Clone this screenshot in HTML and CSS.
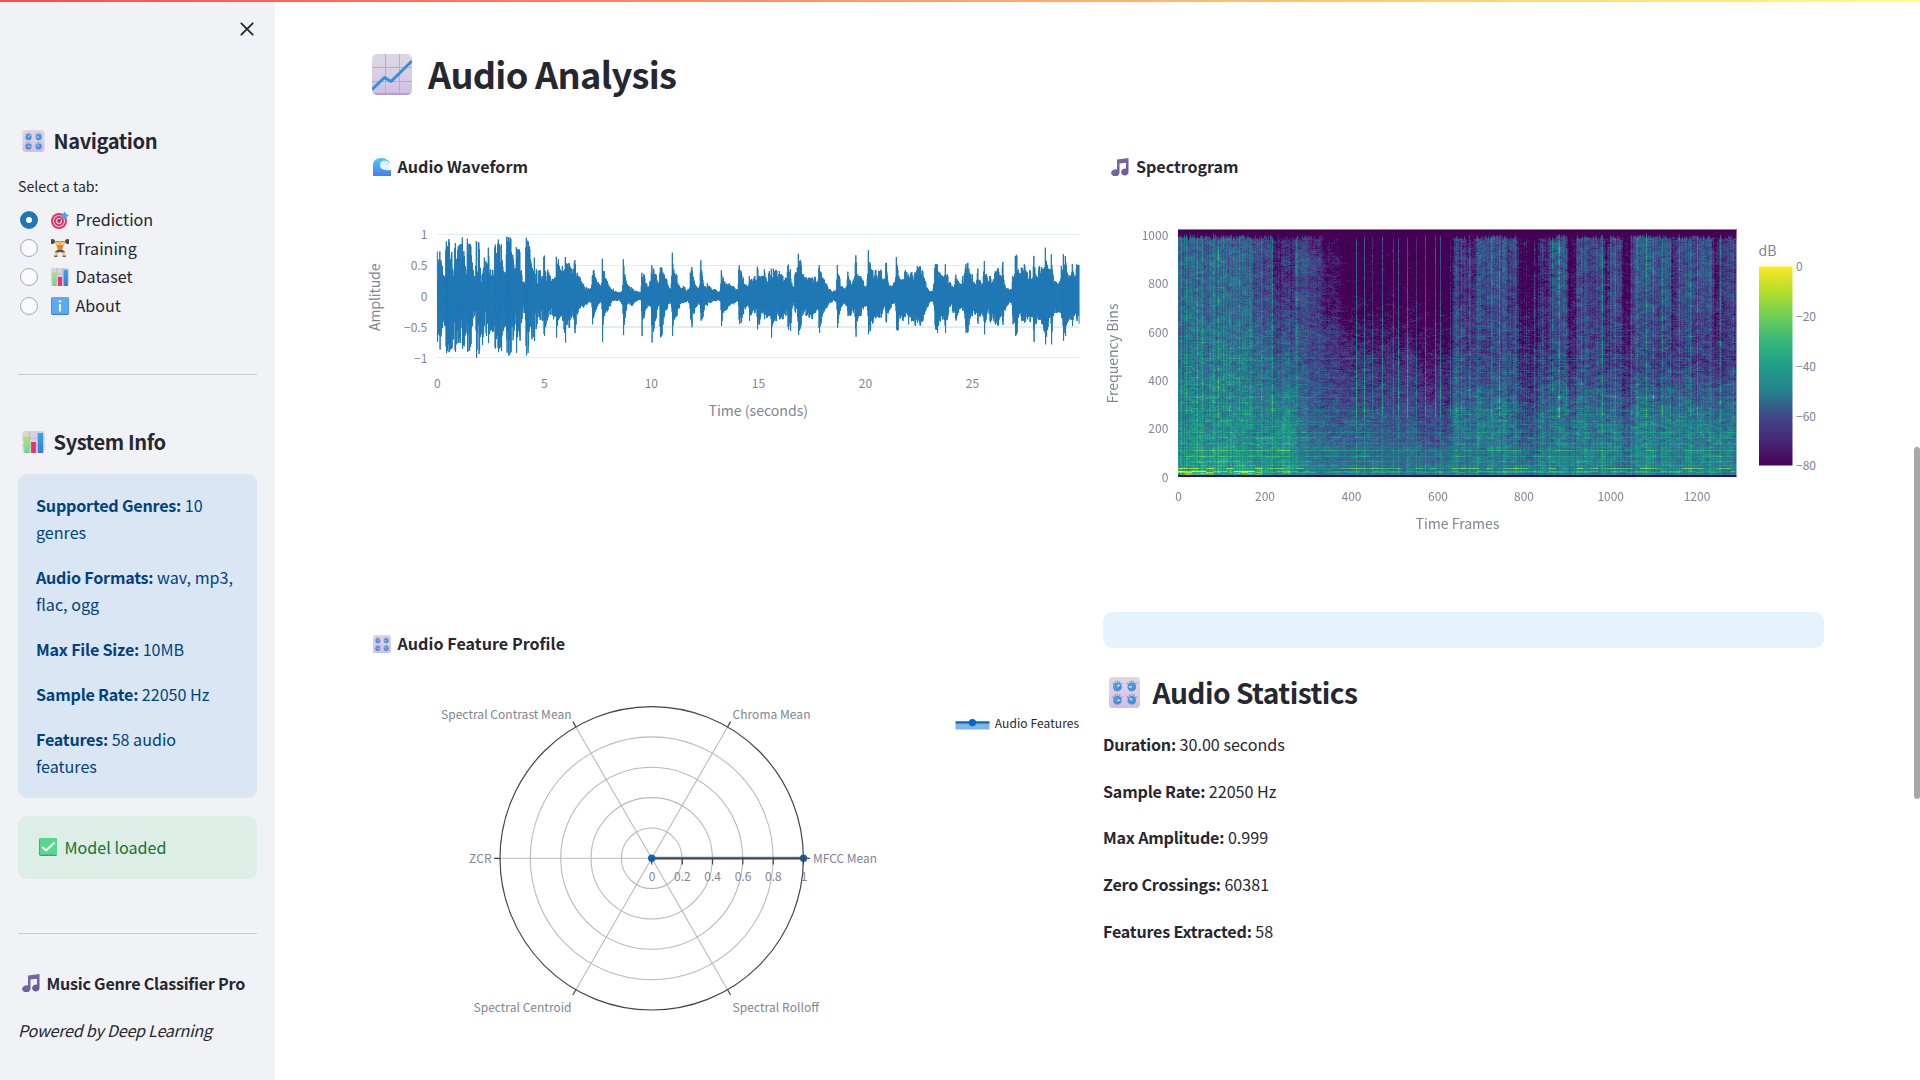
FILE: index.html
```html
<!DOCTYPE html>
<html lang="en">
<head>
<meta charset="utf-8">
<title>Music Genre Classifier Pro</title>
<link rel="stylesheet" href="styles.css">
</head>
<body>
<svg class="defs" width="0" height="0" aria-hidden="true">
  <defs>
    <linearGradient id="g-plate" x1="0" y1="0" x2="0" y2="1"><stop offset="0" stop-color="#dcd8e2"/><stop offset=".5" stop-color="#dacde6"/><stop offset="1" stop-color="#cfbfe3"/></linearGradient>
    <linearGradient id="g-wave" x1="0" y1="0" x2="0" y2="1"><stop offset="0" stop-color="#50c8fa"/><stop offset="1" stop-color="#4a7df0"/></linearGradient>
    <linearGradient id="g-green" x1="0" y1="0" x2="0" y2="1"><stop offset="0" stop-color="#b6e368"/><stop offset="1" stop-color="#5fdc9a"/></linearGradient>
    <linearGradient id="g-blue" x1="0" y1="0" x2="0" y2="1"><stop offset="0" stop-color="#35a5f0"/><stop offset="1" stop-color="#3b7bd0"/></linearGradient>
    <linearGradient id="g-note" x1="0" y1="0" x2="1" y2="1"><stop offset="0" stop-color="#7f70b0"/><stop offset="1" stop-color="#66559c"/></linearGradient>
    <linearGradient id="g-db" x1="0" y1="0" x2="0" y2="1">
      <stop offset="0" stop-color="#fde725"/><stop offset=".125" stop-color="#b5de2b"/><stop offset=".25" stop-color="#6ece58"/><stop offset=".375" stop-color="#35b779"/><stop offset=".5" stop-color="#1f9e89"/><stop offset=".625" stop-color="#26828e"/><stop offset=".75" stop-color="#3e4989"/><stop offset=".875" stop-color="#482878"/><stop offset="1" stop-color="#440154"/>
    </linearGradient>
    <g id="knob">
      <path d="M-3.8-2.6l-1.2-1.1M-2-4.2l-.5-1.6M0-4.6v-1.800M2-4.2l.5-1.600M3.800-2.600l1.200-1.100" stroke="#9a8e9d" stroke-width="1.200" fill="none"/>
      <circle r="4.500" cy=".6" fill="#a99bc6"/><circle r="4.200" fill="#3f8ed8"/><circle r="3" cx="-.6" cy="-.7" fill="#4d9be2"/>
    </g>
    <symbol id="i-knobs" viewBox="0 0 32 32">
      <rect width="32" height="32" rx="3.5" fill="url(#g-plate)"/>
      <use href="#knob" x="8.7" y="10"/><use href="#knob" x="23.5" y="10"/><use href="#knob" x="8.7" y="23.8"/><use href="#knob" x="23.5" y="23.8"/>
      <path d="M8.7 10l2.2-2M23.5 10.3h-3M8.7 24h3M23.5 23.8l-2.2-2" stroke="#fff" stroke-width="1.1"/>
    </symbol>
    <symbol id="i-bars" viewBox="0 0 32 32">
      <rect width="32" height="32" rx="3.5" fill="#d9d2e0"/>
      <path d="M0 10.5h32M0 21.5h32M10.5 0v32M21.5 0v32" stroke="#b8adbd" stroke-width="1.2"/>
      <path d="M2.5 7.5h7V32h-6q-1 0-1-1z" fill="url(#g-green)"/><path d="M12.5 16h7v16h-7z" fill="#e8336e"/><path d="M22.5 3H30v28q0 1-1 1h-6.500z" fill="url(#g-blue)"/>
    </symbol>
    <symbol id="i-line" viewBox="0 0 40 41">
      <rect width="40" height="41" rx="5" fill="url(#g-plate)"/>
      <path d="M0 13.500h40M0 27.500h40M13.500 0v41M27.500 0v41" stroke="#b9aebf" stroke-width="1"/>
      <path d="M1 39q2 2 5 2h28q4 0 5-2z" fill="#b99dd2"/>
      <path d="M0 35.500L12.500 23.500l6.500 4L40 7" fill="none" stroke="#3590d8" stroke-width="3" stroke-linejoin="round"/>
    </symbol>
    <symbol id="i-wave" viewBox="0 0 18 18">
      <path d="M0 18V8Q0 0 8 0q7 0 9 5.500-1-1-2.500-.5L13 7l2 1.500q-1 2.500-4 3 3 1.500 7 .3V18z" fill="url(#g-wave)"/>
      <path d="M8 3.500q3-1.500 6-.5 2.500 1.500 3.500 4-.5 3.500-4 4.500-4 .8-6-2-1-3 .5-6z" fill="#e9f5fc"/><path d="M9 3l1 1.500M12 3.500L11 5M15 5l-1 1.500" stroke="#8cd3f7" stroke-width=".9"/>
    </symbol>
    <symbol id="i-note" viewBox="0 0 18 18">
      <path d="M6 1.500L17.500 0v14a3.700 3.400 0 1 1-2.500-3.200V4.800l-6.500.8v9A4.200 3.500 0 1 1 6 11.600z" fill="url(#g-note)"/>
    </symbol>
    <symbol id="i-target" viewBox="0 0 18 18">
      <circle cx="8" cy="10" r="8" fill="#d93868"/><circle cx="8" cy="10" r="6.100" fill="#f3c3d4"/><circle cx="8" cy="10" r="5" fill="#d93868"/><circle cx="8" cy="10" r="3" fill="#f6d9e4"/><circle cx="8" cy="10" r="1.900" fill="#c72d5c"/>
      <path d="M8 10l6-6" stroke="#5a4f86" stroke-width="1"/><path d="M10.500 7.500L11 4l3-3.500.8 2.500L18 4l-3.500 3.200z" fill="#3fa7ef"/>
    </symbol>
    <symbol id="i-lift" viewBox="0 0 18 18">
      <path d="M1 2.500h16" stroke="#77727d" stroke-width="1"/><path d="M0 .8Q0 0 1 0h1.500v5H1Q0 5 0 4.200zM15.500 0H17q1 0 1 .8v3.400q0 .8-1 .8h-1.500zM2.500.8h1.200v3.500H2.500zM14.300.8h1.200v3.500h-1.200z" fill="#494552"/>
      <path d="M4.500 2.500L6.500 7h5l2-4.500" fill="none" stroke="#f9bd3c" stroke-width="1.900"/><circle cx="9" cy="4" r="2.100" fill="#f6b13a"/>
      <path d="M6 6h6l-.8 6H6.800z" fill="#f57c26"/><path d="M6.500 11h5l2.500 1.500-1 1.500-4-1-4 1-1-1.500z" fill="#54506b"/><path d="M4.500 13l1.200 3.500M13.500 13l-1.200 3.500" stroke="#f9bd3c" stroke-width="1.900"/><path d="M3 16.500h3.500V18H3zM11.500 16.500H15V18h-3.500z" fill="#77616b"/>
    </symbol>
    <symbol id="i-info" viewBox="0 0 18 18">
      <rect width="18" height="18" rx="1.800" fill="#3f80dc"/><rect x=".6" width="17" height="16.800" rx="1.500" fill="#5aa9fa"/><circle cx="9" cy="4.300" r="1.300" fill="#fff"/><path d="M9 7v7.500" stroke="#fff" stroke-width="2"/>
    </symbol>
    <symbol id="i-check" viewBox="0 0 18 18">
      <rect width="18" height="18" rx="1.800" fill="#3aa070"/><rect x=".7" width="17.300" height="16.800" rx="1.500" fill="#55d88b"/><path d="M3.700 9.500l3.300 3 8-7.500" fill="none" stroke="#fff" stroke-width="2" stroke-linecap="round" stroke-linejoin="round"/>
    </symbol>
  </defs>
</svg>
<div class="topbar"></div>
<div class="scroll-thumb"></div>
<div class="app">
  <aside class="sidebar">
    <div class="close-row"><svg width="14" height="14" viewBox="0 0 14 14"><path d="M1.300 1.300l11.400 11.400M12.700 1.300L1.300 12.700" stroke="#262730" stroke-width="1.800" stroke-linecap="round"/></svg></div>
    <h2 class="side-title nav-title"><svg class="ic-md"><use href="#i-knobs"/></svg><span>Navigation</span></h2>
    <p class="radio-label">Select a tab:</p>
    <div class="radios">
      <label class="radio"><i class="dot on"></i><svg class="ic-sm"><use href="#i-target"/></svg><span>Prediction</span></label>
      <label class="radio"><i class="dot"></i><svg class="ic-sm"><use href="#i-lift"/></svg><span>Training</span></label>
      <label class="radio"><i class="dot"></i><svg class="ic-sm"><use href="#i-bars"/></svg><span>Dataset</span></label>
      <label class="radio"><i class="dot"></i><svg class="ic-sm"><use href="#i-info"/></svg><span>About</span></label>
    </div>
    <div class="rule"></div>
    <h2 class="side-title info-title"><svg class="ic-md"><use href="#i-bars"/></svg><span>System Info</span></h2>
    <div class="info-box">
      <p><b>Supported Genres:</b> 10 genres</p>
      <p><b>Audio Formats:</b> wav, mp3, flac, ogg</p>
      <p><b>Max File Size:</b> 10MB</p>
      <p><b>Sample Rate:</b> 22050 Hz</p>
      <p><b>Features:</b> 58 audio<br>features</p>
    </div>
    <div class="ok-box"><svg class="ic-sm"><use href="#i-check"/></svg><span>Model loaded</span></div>
    <div class="rule"></div>
    <p class="brand"><svg class="ic-sm"><use href="#i-note"/></svg><b>Music Genre Classifier Pro</b></p>
    <p class="powered">Powered by Deep Learning</p>
  </aside>
  <main class="main">
    <h1 class="page-title"><svg><use href="#i-line"/></svg><span>Audio Analysis</span></h1>
    <div class="grid">
      <svg class="chart" width="720" height="480" viewBox="365 130 720 480">
        <use href="#i-wave" x="373" y="158" width="18" height="18"/>
        <text class="ct" x="397.500" y="173.300" textLength="130.500">Audio Waveform</text>
        <path d="M437 234.500h642M437 265.500h642M437 296.500h642M437 357.500h642" stroke="#e6eaf1"/>
        <path d="M437 327h642" stroke="#e6eaf1" stroke-width="2"/>
        <path id="waveform" fill="none" stroke="#1f77b4" stroke-width="1" stroke-linejoin="bevel"/>
        <g class="tk end"><text x="427.300" y="239">1</text><text x="427.300" y="269.700">0.5</text><text x="427.300" y="301">0</text><text x="427.300" y="332">−0.5</text><text x="427.300" y="363">−1</text></g>
        <g class="tk mid"><text x="437.300" y="388">0</text><text x="544.300" y="388">5</text><text x="651.300" y="388">10</text><text x="758.500" y="388">15</text><text x="865.500" y="388">20</text><text x="972.500" y="388">25</text></g>
        <text class="at" x="708.500" y="416" textLength="99.500">Time (seconds)</text>
        <text class="at" transform="translate(380.200 331) rotate(-90)" textLength="67.500">Amplitude</text>
      </svg>
      <svg class="chart" width="721" height="480" viewBox="1103 130 721 480">
        <use href="#i-note" x="1111" y="158" width="18" height="18"/>
        <text class="ct" x="1136" y="173.300" textLength="102.500">Spectrogram</text>
        <foreignObject x="1178" y="229" width="559" height="248"><canvas id="spectrogram" class="spectrogram" width="559" height="248"></canvas></foreignObject>
        <path d="M1178 229.500h558.500v247.500" fill="none" stroke="#fff" stroke-opacity=".45"/>
        <g class="tk end"><text x="1168.300" y="239.700">1000</text><text x="1168.300" y="288">800</text><text x="1168.300" y="336.500">600</text><text x="1168.300" y="384.800">400</text><text x="1168.300" y="433">200</text><text x="1168.300" y="481.500">0</text></g>
        <g class="tk mid"><text x="1178.700" y="501">0</text><text x="1265" y="501">200</text><text x="1351.500" y="501">400</text><text x="1438" y="501">600</text><text x="1524" y="501">800</text><text x="1610.700" y="501">1000</text><text x="1697" y="501">1200</text></g>
        <text class="at" x="1415.500" y="528.700" textLength="84">Time Frames</text>
        <text class="at" transform="translate(1118.200 403.500) rotate(-90)" textLength="100">Frequency Bins</text>
        <text class="at" x="1758.500" y="256">dB</text>
        <rect x="1759" y="266.500" width="33.500" height="199" fill="url(#g-db)"/>
        <g class="tk"><text x="1796" y="271.300">0</text><text x="1796" y="321.300">−20</text><text x="1796" y="371.300">−40</text><text x="1796" y="421">−60</text><text x="1796" y="470.300">−80</text></g>
      </svg>
      <svg class="chart" width="720" height="468" viewBox="365 612 720 468">
        <use href="#i-knobs" x="373" y="635" width="18" height="18"/>
        <text class="ct" x="397.500" y="650" textLength="167.500">Audio Feature Profile</text>
        <g fill="none" stroke="#bababa" stroke-width="1.100">
          <circle cx="651.700" cy="858.300" r="30.350"/><circle cx="651.700" cy="858.300" r="60.700"/><circle cx="651.700" cy="858.300" r="91"/><circle cx="651.700" cy="858.300" r="121.400"/>
          <path d="M500 858.300h303.500M575.850 726.900l151.700 262.800M727.550 726.900L575.850 989.700"/>
        </g>
        <path d="M651.700 858.300h151.700" stroke="#0068c9" stroke-opacity=".75" stroke-width="3"/>
        <circle cx="651.700" cy="858.300" r="3.700" fill="#0068c9"/><circle cx="803.500" cy="858.300" r="3.700" fill="#0068c9"/>
        <g fill="none" stroke="#444" stroke-width="1.200">
          <circle cx="651.700" cy="858.300" r="151.700"/>
          <path d="M651.700 858.300h158.300M494 858.300h6.500M575.850 726.900l-3-5.300M727.550 726.900l3-5.300M575.850 989.700l-3 5.300M727.550 989.700l3 5.300M651.700 858v6.500M682.300 858v6.500M712.500 858v6.500M742.800 858v6.500M773.300 858v6.500M803.500 858v6.500"/>
        </g>
        <g class="tk mid"><text x="652" y="881">0</text><text x="682.300" y="881">0.2</text><text x="712.600" y="881">0.4</text><text x="743" y="881">0.6</text><text x="773.300" y="881">0.8</text><text x="804" y="881">1</text></g>
        <g class="tk"><text x="441" y="719" textLength="130.500">Spectral Contrast Mean</text><text x="469" y="863.300" textLength="22.700">ZCR</text><text x="473.500" y="1012" textLength="98">Spectral Centroid</text><text x="732.500" y="719" textLength="78">Chroma Mean</text><text x="813" y="863.300" textLength="64">MFCC Mean</text><text x="732.500" y="1012" textLength="86.500">Spectral Rolloff</text></g>
        <path d="M955.500 724h34v5.500h-34z" fill="#80b4e4"/><path d="M955.500 722.500h34" stroke="#0068c9" stroke-width="2.500"/><circle cx="972.400" cy="722.600" r="3.700" fill="#0068c9"/>
        <text class="tk lg" x="994.700" y="728" textLength="84.500">Audio Features</text>
      </svg>
      <section class="stats">
        <div class="banner"></div>
        <h2><svg><use href="#i-knobs"/></svg><span>Audio Statistics</span></h2>
        <p><b>Duration:</b> 30.00 seconds</p>
        <p><b>Sample Rate:</b> 22050 Hz</p>
        <p><b>Max Amplitude:</b> 0.999</p>
        <p><b>Zero Crossings:</b> 60381</p>
        <p><b>Features Extracted:</b> 58</p>
      </section>
    </div>
  </main>
</div>
<script src="charts.js"></script>
</body>
</html>
```
FILE: styles.css
```css
* { box-sizing: border-box; margin: 0; padding: 0; }
body { height: 1080px; overflow: hidden; background: #fff; color: #262730; font-family: "Noto Sans CJK JP", "Noto Sans", sans-serif; font-size: 16.1px; line-height: 27px; }
b, h1, h2 { font-weight: 600; }
b { letter-spacing: -0.2px; }
svg { flex: none; }
.defs { position: absolute; }
.topbar { position: absolute; z-index: 2; top: 0; left: 0; right: 0; height: 2px; background: linear-gradient(90deg, #ff4b4b, #fffd80); }
.scroll-thumb { position: absolute; z-index: 2; top: 447px; right: 0; width: 6px; height: 352px; border-radius: 3px; background: #a8a8ac; }
.app { display: flex; height: 1080px; }
.sidebar { flex: none; width: 275px; padding: 22px 18px 0; background: #f0f2f6; }
.close-row { display: flex; justify-content: flex-end; height: 14px; padding-right: 3px; }
.close-row svg { display: block; }
.ic-sm { width: 18px; height: 18px; }
.ic-md { width: 23px; height: 22px; }
.side-title { display: flex; align-items: center; gap: 8.500px; height: 27px; padding-left: 4px; font-size: 20.1px; letter-spacing: -0.4px; }
.nav-title { margin-top: 91px; margin-bottom: 20px; }
.radio-label { height: 24px; line-height: 24px; font-size: 14.100px; margin-bottom: 7.500px; letter-spacing: 0.03px; }
.radios { display: grid; grid-auto-rows: 28.600px; }
.radio { display: flex; align-items: center; padding-left: 2px; }
.dot { flex: none; width: 18px; height: 18px; margin-right: 12.500px; border: 1px solid #a3a8b4; border-radius: 50%; background: #fafafc; }
.dot.on { border: 6px solid #1f77b4; background: #fff; }
.radio span { margin-left: 7px; }
.rule { height: 1px; margin-top: 54px; background: #c9cbd1; }
.radios + .rule { margin-top: 54.400px; }
.info-title { margin: 53px 0 18.500px; }
.info-box { height: 324px; padding: 18px; border-radius: 9px; background: #dbe6f4; color: #004280; }
.info-box p { position: relative; top: 0.500px; }
.info-box p + p { margin-top: 18px; }
.ok-box { display: flex; align-items: center; height: 63px; margin-top: 18px; padding-left: 21px; border-radius: 9px; background: #dceee6; color: #177233; }
.ok-box span { margin-left: 7.500px; }
.brand { display: flex; align-items: center; margin-top: 36px; padding-left: 4px; gap: 6.500px; }
.brand b { letter-spacing: -0.230px; }
.powered { margin-top: 20px; font-style: italic; letter-spacing: -0.25px; }
.main { flex: 1; padding: 49px 0 0 90px; }
.page-title { display: flex; align-items: center; gap: 16px; height: 49px; padding-left: 7px; font-size: 36.200px; line-height: 49px; letter-spacing: -0.700px; }
.page-title svg { width: 40px; height: 41px; margin-top: 2px; }
.grid { display: grid; grid-template-columns: 720px 721px; grid-template-rows: 482px 468px; column-gap: 18px; margin-top: 32px; }
.chart { display: block; overflow: hidden; font-family: inherit; }
.ct { font-size: 16.100px; font-weight: 700; fill: #262730; }
.tk { font-size: 12px; fill: #808495; }
.at { font-size: 14.100px; fill: #808495; }
.lg { fill: #262730; }
.mid { text-anchor: middle; }
.end { text-anchor: end; }
.spectrogram { display: block; }
.banner { height: 36px; border-radius: 9px; background: #e6f3fd; }
.stats h2 { display: flex; align-items: center; gap: 12.500px; height: 40px; margin: 24px 0 19px; padding-left: 6px; font-size: 28.200px; line-height: 40px; letter-spacing: -0.550px; }
.stats h2 svg { width: 31px; height: 31px; }
.stats p { height: 27px; margin-bottom: 19.700px; }
```
FILE: charts.js
```js
// Waveform envelope: x, upper and lower extent, in thirds of a pixel.
const first = [262,133,137,266,100,100,269,138,167,273,104,115,277,90,95,283,60,90,288,168,174,292,150,165,297,178,170,301,110,160,305,140,158,310,60,130,315,175,175,319,110,145,324,150,140,330,155,140,337,176,158,342,130,150,347,80,110,352,172,168,357,155,165,362,155,150,367,100,90,373,60,60,379,165,185,387,160,173,392,65,110,397,60,147,403,115,90,408,100,120,415,145,140,421,80,105,428,78,107,435,163,167,440,120,120,444,174,172,449,150,155,454,155,165,460,75,100,465,70,90,470,178,170,476,175,180,482,175,170,489,120,130,493,80,90,499,147,170,504,140,100,509,138,140,515,65,70,522,40,50,528,177,180,534,165,170,539,145,80,545,85,130,553,115,135,560,75,85,570,78,70,577,60,75,582,137,128,587,60,85,593,80,65,600,60,55,610,50,70,615,55,60,619,118,125,625,110,72,632,75,60,637,90,75,642,70,110,646,117,140,652,95,80,657,100,100,665,80,60,674,110,115,682,70,55,690,55,35,700,35,35,710,25,25,722,22,20,727,60,85,731,80,60,738,50,40,745,40,25,753,30,20,757,112,137,763,75,60,772,45,45,780,25,30,790,22,15,800,12,15,815,13,25,820,110,117,825,60,60,832,35,25,845,25,30,860,15,15,872,12,12,875,70,125,882,65,60,890,35,35,900,45,30,905,93,143,911,80,100,918,65,65,926,35,25,930,85,125,935,85,120,942,65,60,950,50,40,960,20,20,967,130,120,973,68,70,980,65,60,988,30,35,1000,30,20,1015,20,20,1021,70,70,1025,90,97,1032,45,50,1040,28,30,1047,25,25,1052,112,75,1058,50,65,1065,28,25,1072,38,30,1082,25,20,1095,20,15,1108,15,15,1114,77,90,1120,55,50,1130,35,40,1138,38,30];
const second = [40,30,25,50,20,15,57,95,85,63,75,80,70,55,55,80,30,30,88,60,75,95,50,50,104,60,50,112,88,100,118,60,85,126,60,50,133,80,70,140,45,65,147,75,60,154,82,125,160,82,80,168,78,75,178,75,70,188,60,70,196,55,60,204,97,100,211,80,105,217,30,30,225,70,50,235,127,117,242,105,90,250,65,55,258,55,60,267,55,65,276,55,70,285,58,50,292,45,40,297,97,117,303,70,80,312,50,45,320,35,35,330,20,20,345,15,15,352,93,95,358,60,55,368,25,25,378,25,30,383,75,60,390,45,60,400,50,50,407,127,127,414,60,60,422,60,60,430,45,40,437,25,30,445,137,115,450,98,105,458,75,80,467,78,65,477,75,65,483,80,65,490,50,40,498,110,85,504,40,50,512,30,35,522,40,20,529,117,100,533,80,105,540,50,65,548,50,75,555,78,60,565,65,85,575,72,75,585,70,90,592,90,80,600,90,90,608,75,75,616,45,45,625,20,30,635,15,15,645,95,100,652,95,110,660,68,75,668,60,70,676,95,110,683,60,60,690,40,30,698,25,50,707,65,75,715,45,50,722,35,35,728,60,45,737,95,110,743,102,110,750,65,65,757,65,60,765,35,55,773,85,85,780,45,60,793,105,115,800,60,50,810,60,80,820,50,75,825,75,85,834,85,90,842,60,60,848,108,90,855,28,40,865,22,25,872,20,20,878,60,85,886,120,120,890,125,115,896,70,55,904,85,75,913,95,80,922,70,70,930,80,80,936,50,60,941,125,142,948,60,80,957,90,70,965,85,85,971,80,105,976,145,145,983,85,95,989,80,60,994,125,145,1000,60,60,1010,40,50,1020,45,50,1024,90,65,1030,125,135,1036,120,120,1042,70,80,1050,60,70,1057,95,90,1063,60,60,1070,95,75,1077,93,85];
let seed = 7;
const rnd = () => (seed = (seed * 16807) % 2147483647) / 2147483647;
const pts = [];
for (let i = 0; i < first.length; i += 3) pts.push([350 + first[i] / 3, first[i + 1] / 3, first[i + 2] / 3]);
for (let i = 0; i < second.length; i += 3) pts.push([720 + second[i] / 3, second[i + 1] / 3, second[i + 2] / 3]);
let d = '', k = 0;
for (let x = pts[0][0]; x < 1079; x += 0.5) {
  while (k < pts.length - 2 && pts[k + 1][0] <= x) k++;
  const a = pts[k], b = pts[k + 1], f = Math.min(1, (x - a[0]) / (b[0] - a[0]));
  const near = Math.min(f, 1 - f) * (b[0] - a[0]) < 0.4;
  const low = x < 545 ? 0.35 : 0.6;
  const j1 = near ? 1 : low + (1 - low) * rnd(), j2 = near ? 1 : low + (1 - low) * rnd();
  // Attack is sudden, decay is gradual
  const g = b[1] + b[2] > a[1] + a[2] ? f * f * f : f;
  const up = (a[1] + (b[1] - a[1]) * g) * j1, dn = (a[2] + (b[2] - a[2]) * g) * j2;
  d += (d ? 'L' : 'M') + x.toFixed(2) + ' ' + (296 - up).toFixed(1) + 'L' + (x + 0.25).toFixed(2) + ' ' + (296 + dn).toFixed(1);
}
document.getElementById('waveform').setAttribute('d', d);

// Spectrogram: start column, then level at five heights from low to high frequency.
const W = 559, H = 248;
const bands = [
  [0,.54,.46,.38,.34,.31],[76,.50,.42,.33,.22,.22],[97,.52,.50,.27,.15,.09],[118,.48,.40,.28,.21,.20],[131,.42,.31,.22,.15,.13],
  [146,.40,.28,.16,.04,-.02],[165,.40,.27,.13,-.04,-.08],[240,.40,.22,.06,-.09,-.11],[276,.43,.38,.22,.16,.16],[300,.44,.39,.22,.24,.28],
  [330,.44,.37,.24,.18,.23],[341,.40,.26,.10,.01,-.03],[362,.44,.37,.17,.11,.12],[374,.44,.38,.2,.24,.26],[390,.42,.31,.08,.02,-.04],
  [399,.44,.39,.2,.21,.23],[427,.42,.31,.10,.04,.01],[432,.44,.38,.17,.24,.24],[445,.42,.29,.10,.03,.01],[455,.44,.41,.2,.26,.30],
  [494,.42,.38,.14,.09,.09],[500,.44,.41,.18,.25,.26],[536,.44,.37,.12,.06,.06],[542,.44,.41,.17,.2,.2]];
const levelY = [0, 50, 115, 180, 240];
const streaks = {};
const streak = (u, s) => { streaks[u] = s; };
[3,8,13,19,24,32,35,40,45,51,55,61,67,72,77,83,88,94].forEach((u, i) => streak(u, i % 2 ? .17 : .1));
[108,118].forEach(u => streak(u, .13));
[178,186,194,204,215,220,229,238,247,257,262,272,278,283,291,302,313,321,332,348,356,364,388,403,418,424,437,453,459,484,492,501,512,533,542,555].forEach((u, i) => streak(u, .1 + .1 * (i % 3 ? 1 : 0)));
[178,186,204,220,229,247,257,262].forEach(u => streak(u, .34));
[381,380,374,468,475,519].forEach(u => streak(u, .24));
const lines = [[118,.11],[106,.08],[99,.06],[88,.07],[79,.1],[66,.11],[60,.04],[55,.08],[52,.09],[44,.13],[39,.11],[33,.1],[29,.07],[26,.22],[20,.17],[15,.1],[11,.12],[8,.33],[5,.22],[4,.15]];
const harm = {};
lines.forEach(l => { harm[l[0]] = l[1]; });
const stops = [[68,1,84],[72,40,120],[62,73,137],[49,104,142],[38,130,142],[31,158,137],[53,183,121],[110,206,88],[181,222,43],[253,231,37]];
const ctx = document.getElementById('spectrogram').getContext('2d');
const img = ctx.createImageData(W, H);
const colNoise = Array.from({ length: W }, () => rnd() - .5);
// Smooth random field on a coarse lattice, gives the mottled texture
const GW = 130, grid = Array.from({ length: GW * 130 }, () => rnd() - .5);
const field = (u, v) => {
  const x = u / 5, y = v / 3, i = Math.floor(x), j = Math.floor(y), a = x - i, b = y - j, o = j * GW + i;
  return (grid[o] * (1 - a) + grid[o + 1] * a) * (1 - b) + (grid[o + GW] * (1 - a) + grid[o + GW + 1] * a) * b;
};
const at = (b, v) => {
  let i = 0;
  while (i < 3 && v > levelY[i + 1]) i++;
  return b[i + 1] + (b[i + 2] - b[i + 1]) * Math.min(1, (v - levelY[i]) / (levelY[i + 1] - levelY[i]));
};
for (let v = 0; v < H; v++) {
  let bi = 0, prev = 0, g = 0;
  for (let u = 0; u < W; u++) {
    while (bi < bands.length - 1 && bands[bi + 1][0] <= u) bi++;
    let t = at(bands[bi], v);
    const next = bands[bi + 1];
    if (next && next[0] - u < 4) t += (at(next, v) - t) * (4 - next[0] + u) / 5;
    if (u % 7 === 0) g = rnd();
    const lively = u < 130 || u > 276;
    t += colNoise[u] * (lively ? .13 : .06) + field(u, v) * .13;
    if (streaks[u]) t += streaks[u] * (v < 60 ? .35 : 1) * (lively ? .8 + field(u, v) : 1);
    if (harm[v]) t += harm[v] * (v < 10 ? (g > .4 ? 1 : .3) : lively ? .3 + g * .9 : (u < 200 ? 1 : .6));
    else if (lively && v < 150 && v > 12 && v % 6 === 2) t += g * g * .14;
    if (v < 130 && u > 290 && v > 14) t += Math.sin(v * .9 + Math.sin(u / 7) * 2) * .07 * Math.max(0, field(u * .7, v * .2 + 60) + .15);
    if (v < 7 && v > 1 && (u < 35 || (u > 50 && u < 85))) t += .26 * g;
    // Bright cluster in the upper band that fades to the right
    if (u >= 117 && u < 190) {
      const fade = Math.exp(-(u - 117) / 20);
      t += fade * (.18 * Math.exp(-Math.pow((v - 213) / 14, 2)) + .13 * Math.exp(-Math.pow((v - 177) / 5, 2)) + .1 * Math.exp(-Math.pow((v - 140) / 10, 2)));
    }
    const n = (rnd() + rnd() - 1) * (v < 30 ? .07 : .11);
    prev = prev * .35 + n;
    t += prev;
    const cut = 238 + colNoise[(u * 3) % W] * 4;
    if (v > cut) t -= (v - cut) * .12;
    if (v < 2) t = .02;
    t = Math.max(0, Math.min(1, t));
    const p = t * 9, q = Math.min(8, Math.floor(p)), f = p - q, o = ((H - 1 - v) * W + u) * 4;
    for (let c = 0; c < 3; c++) img.data[o + c] = stops[q][c] + (stops[q + 1][c] - stops[q][c]) * f;
    img.data[o + 3] = 255;
  }
}
ctx.putImageData(img, 0, 0);
```
